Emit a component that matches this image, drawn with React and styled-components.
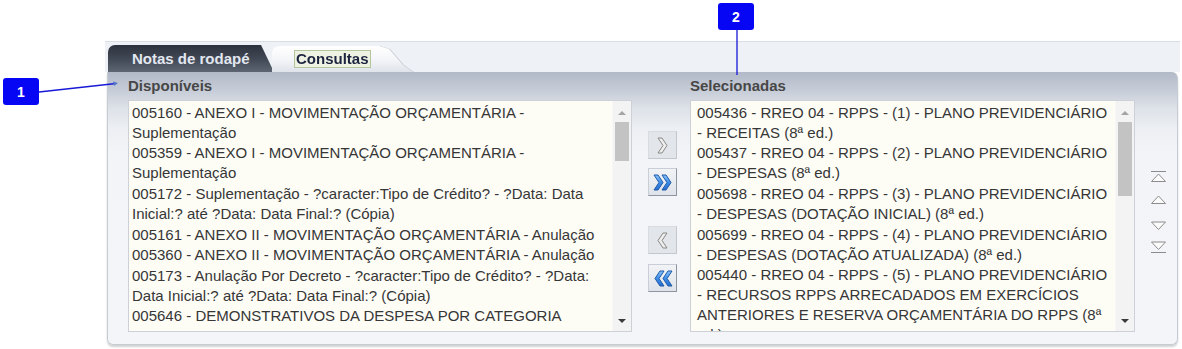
import React from "react";
import styled, { createGlobalStyle, css } from "styled-components";

const Global = createGlobalStyle`
  html, body { margin: 0; padding: 0; background: #ffffff; }
  body { font-family: "Liberation Sans", Arial, sans-serif; }
  #root { width: 1182px; height: 349px; overflow: hidden; }
`;

const Stage = styled.div`
  position: relative;
  width: 1182px;
  height: 349px;
  padding-top: 41px;
  box-sizing: border-box;
`;

const Frame = styled.div`
  margin-left: 105px;
  width: 1075px;
  border-top: 1px solid #d9dee6;
`;

const TabStrip = styled.div`
  height: 30px;
  background: #eef1f5;
  display: flex;
  align-items: flex-end;
  padding-left: 3px;
`;

const TabShell = styled.div`
  display: flex;
  filter: ${(p) => (p.$active ? "drop-shadow(1px 0 0 #c3c8d1)" : "none")};
  margin-left: ${(p) => (p.$active ? "-2px" : "0")};
`;

const Tab = styled.div`
  box-sizing: border-box;
  height: ${(p) => (p.$active ? "26px" : "27px")};
  width: ${(p) => (p.$active ? "141px" : "166px")};
  padding-left: ${(p) => (p.$active ? "22px" : "24px")};
  display: flex;
  align-items: center;
  font-size: 15px;
  font-weight: bold;
  border-top-left-radius: 7px;
  ${(p) =>
    p.$active
      ? css`
          background: linear-gradient(#ffffff 0%, #f5f6f9 50%, #dfe3ea 100%);
          color: #1c2440;
          clip-path: polygon(0 0, calc(100% - 34px) 0, calc(100% - 24px) 3px, calc(100% - 10px) 19px, 100% 100%, 0 100%);
        `
      : css`
          background: linear-gradient(#2c323d 0%, #434a57 55%, #5d6573 100%);
          color: #e3e8f0;
          clip-path: polygon(0 0, calc(100% - 13px) 0, 100% 100%, 0 100%);
        `}
`;

const Focus = styled.span`
  border: 1px solid #b3c59b;
  background: #eef2e3;
  padding: 0 1px;
  line-height: 16px;
`;

const Panel = styled.div`
  margin: 0 2px;
  height: 273px;
  box-sizing: border-box;
  border: 1px solid #c6cbd4;
  border-top: none;
  border-radius: 0 6px 6px 6px;
  background: linear-gradient(#b2b9c7 0px, #c6ccd7 18px, #dde1e8 36px, #eceff3 56px, #f3f4f7 80px, #f4f5f8 100%);
  box-shadow: 0 2px 2px rgba(0, 0, 0, 0.18);
  display: grid;
  grid-template-columns: 504px 58px 445px 1fr;
  padding: 5px 0 0 20px;
`;

const Column = styled.div`
  display: flex;
  flex-direction: column;
`;

const Label = styled.div`
  font-size: 15px;
  font-weight: bold;
  color: #474747;
  line-height: 18px;
  height: 18px;
  margin-bottom: 5px;
`;

const ListBox = styled.div`
  height: 232px;
  box-sizing: border-box;
  border: 1px solid #cdd0d6;
  background: #fdfdf6;
  display: flex;
  overflow: hidden;
`;

const Options = styled.div`
  flex: 1;
  overflow: hidden;
  padding: 1.5px 0 0 ${(p) => p.$pad}px;
`;

const Option = styled.div`
  padding: 0.3px 0;
  font-size: 15px;
  line-height: 20px;
  color: #363636;
  white-space: nowrap;
`;

const ScrollTrack = styled.div`
  width: 18px;
  background: #f3f3f3;
  border-left: 1px solid #f7f7f7;
  display: flex;
  flex-direction: column;
  align-items: center;
`;

const ArrowUp = styled.div`
  margin-top: 10px;
  width: 0;
  height: 0;
  border-left: 4px solid transparent;
  border-right: 4px solid transparent;
  border-bottom: 4px solid #a4a4a4;
`;

const Thumb = styled.div`
  margin-top: 7px;
  width: 14px;
  height: ${(p) => p.$h}px;
  background: #c3c3c3;
`;

const Spacer = styled.div`
  flex: 1;
`;

const ArrowDown = styled.div`
  margin-bottom: 8px;
  width: 0;
  height: 0;
  border-left: 4px solid transparent;
  border-right: 4px solid transparent;
  border-top: 4px solid #3a3a3a;
`;

const Transfer = styled.div`
  display: flex;
  flex-direction: column;
  padding: 54px 0 0 16px;
`;

const MoveButton = styled.div`
  width: 29px;
  height: 28px;
  box-sizing: border-box;
  margin-top: ${(p) => p.$gap}px;
  display: flex;
  align-items: center;
  justify-content: center;
  ${(p) =>
    p.$enabled
      ? css`
          background: linear-gradient(#f1f3f6, #dfe3e9);
          border: 1px solid #c9ced6;
          border-right-color: #8e95a1;
          border-bottom-color: #8e95a1;
        `
      : css`
          background: #e2e5e9;
          border: 1px solid #d8dbe0;
          border-right-color: #c3c7ce;
          border-bottom-color: #c3c7ce;
        `}
`;

const OrderCol = styled.div`
  display: flex;
  flex-direction: column;
  padding: 94px 0 0 15px;
`;

const OrderIcon = styled.svg`
  display: block;
  margin-top: ${(p) => p.$gap}px;
`;

const CalloutBox = styled.div`
  position: absolute;
  left: ${(p) => p.$x}px;
  top: ${(p) => p.$y}px;
  width: 36px;
  height: 27px;
  border-radius: 3px;
  background: #0606f5;
  color: #ffffff;
  font-size: 14px;
  font-weight: bold;
  display: flex;
  align-items: center;
  justify-content: center;
`;

const Leaders = styled.svg`
  position: absolute;
  left: 0;
  top: 0;
  pointer-events: none;
`;

const left = [
  ["005160 - ANEXO I - MOVIMENTAÇÃO ORÇAMENTÁRIA -", "Suplementação"],
  ["005359 - ANEXO I - MOVIMENTAÇÃO ORÇAMENTÁRIA -", "Suplementação"],
  ["005172 - Suplementação - ?caracter:Tipo de Crédito? - ?Data: Data", "Inicial:? até ?Data: Data Final:? (Cópia)"],
  ["005161 - ANEXO II - MOVIMENTAÇÃO ORÇAMENTÁRIA - Anulação"],
  ["005360 - ANEXO II - MOVIMENTAÇÃO ORÇAMENTÁRIA - Anulação"],
  ["005173 - Anulação Por Decreto - ?caracter:Tipo de Crédito? - ?Data:", "Data Inicial:? até ?Data: Data Final:? (Cópia)"],
  ["005646 - DEMONSTRATIVOS DA DESPESA POR CATEGORIA"],
];

const right = [
  ["005436 - RREO 04 - RPPS - (1) - PLANO PREVIDENCIÁRIO", "- RECEITAS (8ª ed.)"],
  ["005437 - RREO 04 - RPPS - (2) - PLANO PREVIDENCIÁRIO", "- DESPESAS (8ª ed.)"],
  ["005698 - RREO 04 - RPPS - (3) - PLANO PREVIDENCIÁRIO", "- DESPESAS (DOTAÇÃO INICIAL) (8ª ed.)"],
  ["005699 - RREO 04 - RPPS - (4) - PLANO PREVIDENCIÁRIO", "- DESPESAS (DOTAÇÃO ATUALIZADA) (8ª ed.)"],
  [
    "005440 - RREO 04 - RPPS - (5) - PLANO PREVIDENCIÁRIO",
    "- RECURSOS RPPS ARRECADADOS EM EXERCÍCIOS",
    "ANTERIORES E RESERVA ORÇAMENTÁRIA DO RPPS (8ª",
    "ed.)",
  ],
];

function List({ items, thumb, pad }) {
  return (
    <ListBox>
      <Options $pad={pad}>
        {items.map((lines, i) => (
          <Option key={i}>
            {lines.map((l, j) => (
              <div key={j}>{l}</div>
            ))}
          </Option>
        ))}
      </Options>
      <ScrollTrack>
        <ArrowUp />
        <Thumb $h={thumb} />
        <Spacer />
        <ArrowDown />
      </ScrollTrack>
    </ListBox>
  );
}

function Chevron({ dir = 1, double, enabled }) {
  const single = "M0,0 L4,0 L9,7.5 L4,15 L0,15 L5,7.5 Z";
  const fill = enabled ? "url(#blueFill)" : "#eeeeee";
  const stroke = enabled ? "#1c58a8" : "#888888";
  const w = double ? 20 : 11;
  return (
    <svg width={w} height="17" viewBox={`-1 -1 ${w} 17`}>
      <defs>
        <linearGradient id="blueFill" x1="0" y1="0" x2="0" y2="1">
          <stop offset="0" stopColor="#8cc4fb" />
          <stop offset="0.5" stopColor="#3c8ee8" />
          <stop offset="1" stopColor="#2a6fd0" />
        </linearGradient>
      </defs>
      <g transform={dir < 0 ? `translate(${w - 2},0) scale(-1,1)` : ""}>
        <path d={single} fill={fill} stroke={stroke} strokeWidth="1" strokeLinejoin="round" />
        {double && (
          <path d={single} transform="translate(8,0)" fill={fill} stroke={stroke} strokeWidth="1" strokeLinejoin="round" />
        )}
      </g>
    </svg>
  );
}

function Tri({ up, bar, gap }) {
  return (
    <OrderIcon width="17" height="12" viewBox="0 0 17 12" $gap={gap}>
      {up ? (
        <>
          {bar && <line x1="1" y1="0.5" x2="16" y2="0.5" stroke="#8c8c8c" strokeWidth="1" />}
          <path d="M1.5,10.5 L8.5,3 L15.5,10.5 Z" fill="#fbfbfb" stroke="#8c8c8c" strokeWidth="1" />
        </>
      ) : (
        <>
          <path d="M1.5,1 L8.5,8.5 L15.5,1 Z" fill="#fbfbfb" stroke="#8c8c8c" strokeWidth="1" />
          {bar && <line x1="1" y1="11.5" x2="16" y2="11.5" stroke="#8c8c8c" strokeWidth="1" />}
        </>
      )}
    </OrderIcon>
  );
}

export default function App() {
  return (
    <>
      <Global />
      <Stage>
        <Frame>
          <TabStrip>
            <TabShell>
              <Tab>Notas de rodapé</Tab>
            </TabShell>
            <TabShell $active>
              <Tab $active>
                <Focus>Consultas</Focus>
              </Tab>
            </TabShell>
          </TabStrip>
          <Panel>
            <Column>
              <Label>Disponíveis</Label>
              <List items={left} thumb={39} pad={3} />
            </Column>
            <Transfer>
              <MoveButton $gap={0}>
                <Chevron />
              </MoveButton>
              <MoveButton $gap={9} $enabled>
                <Chevron double enabled />
              </MoveButton>
              <MoveButton $gap={30}>
                <Chevron dir={-1} />
              </MoveButton>
              <MoveButton $gap={10} $enabled>
                <Chevron dir={-1} double enabled />
              </MoveButton>
            </Transfer>
            <Column>
              <Label>Selecionadas</Label>
              <List items={right} thumb={74} pad={6} />
            </Column>
            <OrderCol>
              <Tri up bar gap={0} />
              <Tri up gap={10} />
              <Tri gap={16} />
              <Tri bar gap={8} />
            </OrderCol>
          </Panel>
        </Frame>
        <CalloutBox $x={3} $y={78}>1</CalloutBox>
        <CalloutBox $x={718} $y={3}>2</CalloutBox>
        <Leaders width="1182" height="349" viewBox="0 0 1182 349">
          <line x1="39" y1="92" x2="116" y2="83.5" stroke="#1818d8" strokeWidth="1.3" />
          <path d="M113,81.5 L118,83 L114,86 Z" fill="#5577cc" />
          <line x1="737" y1="30" x2="737" y2="75" stroke="#1818d8" strokeWidth="1.3" />
        </Leaders>
      </Stage>
    </>
  );
}
